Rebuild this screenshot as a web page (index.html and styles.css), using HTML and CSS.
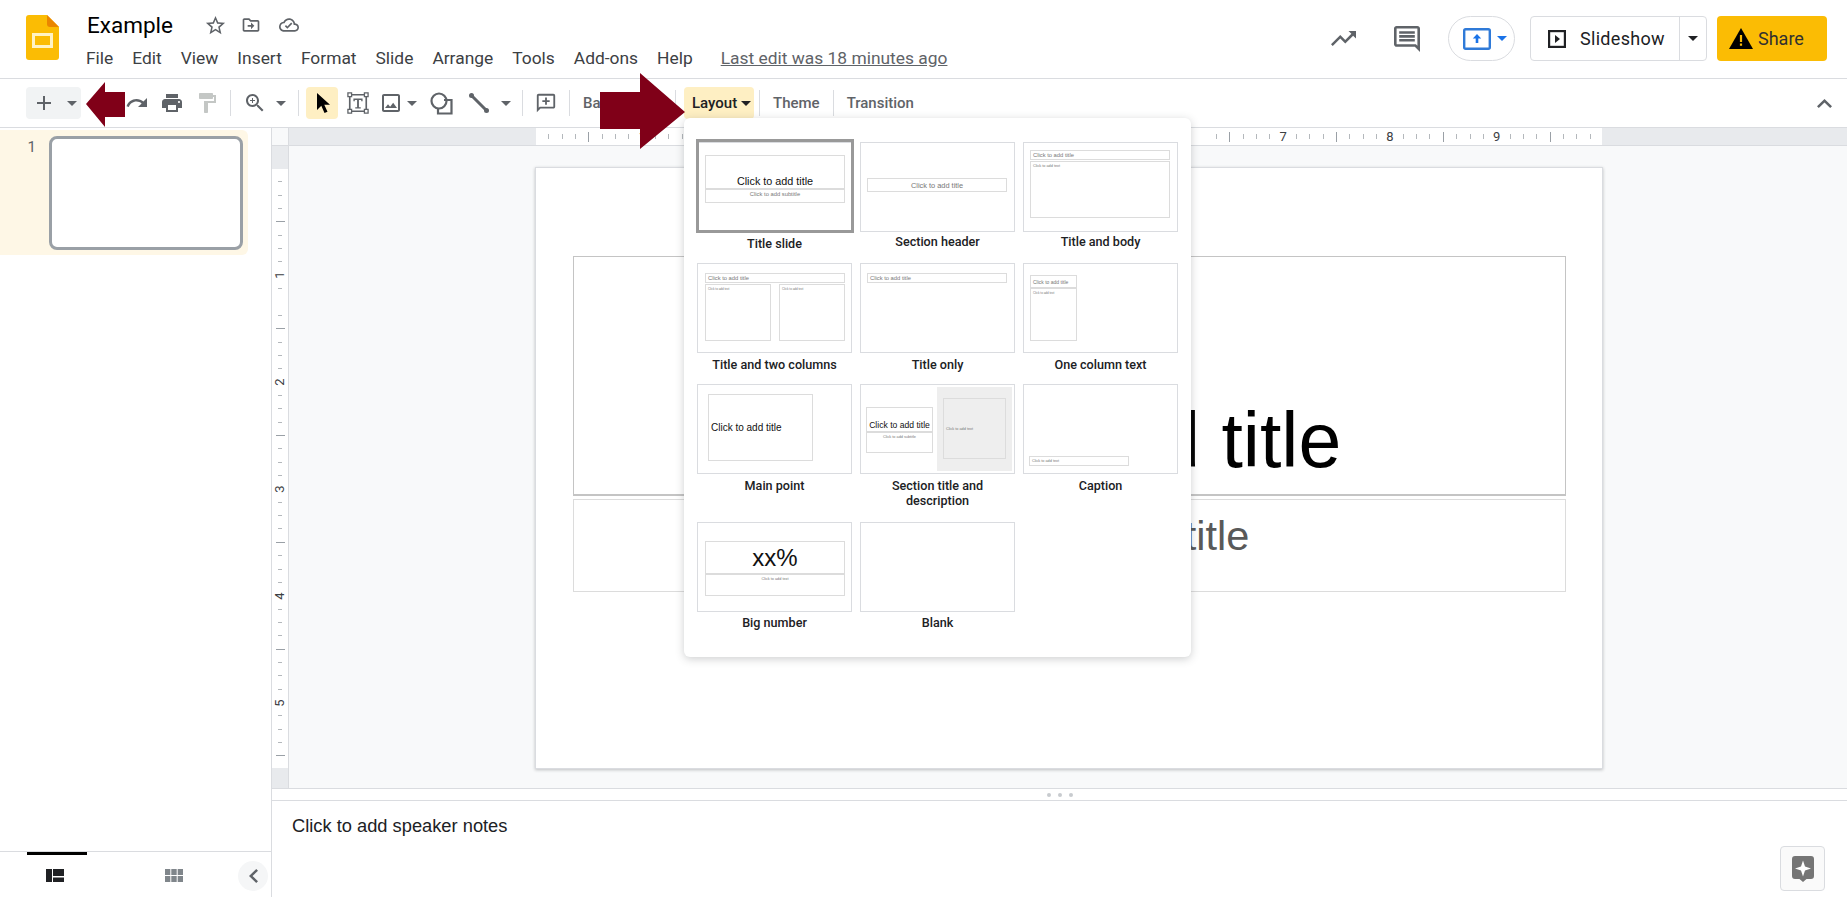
FILE: index.html
```html
<!DOCTYPE html>
<html lang="en">
<head>
  <meta charset="UTF-8" />
  <title>Example - Google Slides</title>
  <link rel="stylesheet" href="styles.css">
</head>
<body>
  <header class="header">
    <svg class="logo" viewBox="0 0 33 45">
      <path d="M3 0H21L33 12V42a3 3 0 0 1-3 3H3a3 3 0 0 1-3-3V3a3 3 0 0 1 3-3z" fill="#fbbc04"/>
      <path d="M21 0L33 12H24a3 3 0 0 1-3-3z" fill="#ea8600"/>
      <rect x="7.5" y="19.5" width="18" height="12" fill="none" stroke="#fff3c4" stroke-width="3"/>
    </svg>
    <div class="doc-info">
      <div class="title-row">
        <span class="doc-title">Example</span>
        <svg class="title-icon star" viewBox="0 0 24 24"><path d="M22 9.24l-7.19-.62L12 2 9.19 8.63 2 9.24l5.46 4.73L5.82 21 12 17.27 18.18 21l-1.63-7.03L22 9.24zM12 15.4l-3.76 2.27 1-4.28-3.32-2.88 4.38-.38L12 6.1l1.71 4.04 4.38.38-3.32 2.88 1 4.28L12 15.4z"/></svg>
        <svg class="title-icon" viewBox="0 0 24 24"><path d="M20 6h-8l-2-2H4c-1.1 0-2 .9-2 2v12c0 1.1.9 2 2 2h16c1.1 0 2-.9 2-2V8c0-1.1-.9-2-2-2zm0 12H4V6h5.17l2 2H20v10zm-8-1v-3H8v-2h4V9l4 4-4 4z"/></svg>
        <svg class="title-icon" viewBox="0 0 24 24"><path d="M19.35 10.04C18.67 6.59 15.64 4 12 4 9.11 4 6.6 5.64 5.35 8.04 2.34 8.36 0 10.91 0 14c0 3.31 2.69 6 6 6h13c2.76 0 5-2.24 5-5 0-2.64-2.05-4.78-4.65-4.96zM19 18H6c-2.21 0-4-1.79-4-4s1.79-4 4-4h.71C7.37 7.69 9.48 6 12 6c3.04 0 5.5 2.46 5.5 5.5v.5H19c1.66 0 3 1.34 3 3s-1.34 3-3 3zm-9-1.5l-3-3 1.41-1.41L10 13.67l4.59-4.58L16 10.5l-6 6z"/></svg>
      </div>
      <nav class="menu">
        <span>File</span><span>Edit</span><span>View</span><span>Insert</span><span>Format</span><span>Slide</span><span>Arrange</span><span>Tools</span><span>Add-ons</span><span>Help</span>
        <a class="last-edit">Last edit was 18 minutes ago</a>
      </nav>
    </div>
    <div class="header-actions">
      <svg class="trend-icon" viewBox="2 6 20 12"><path d="M16 6l2.29 2.29-4.88 4.88-4-4L2 16.59 3.41 18l6-6 4 4 6.3-6.29L22 12V6z"/></svg>
      <svg class="comment-icon" viewBox="2 2 20 20"><path d="M21.99 4c0-1.1-.89-2-1.99-2H4c-1.1 0-2 .9-2 2v12c0 1.1.9 2 2 2h14l4 4-.01-18zM20 4v13.17L18.83 16H4V4h16zM6 12h12v2H6zm0-3h12v2H6zm0-3h12v2H6z"/></svg>
      <div class="present-pill">
        <svg class="present-icon" viewBox="0 0 28 22">
          <rect x="1.2" y="1.2" width="25.6" height="19.6" rx="1.5" fill="none" stroke="#2f7ad8" stroke-width="2.4"/>
          <path d="M14 6l4.2 4.6h-2.9V15h-2.6v-4.4H9.800z" fill="#1a73e8"/>
        </svg>
        <i class="caret caret-blue"></i>
      </div>
      <div class="slideshow">
        <div class="slideshow-main">
          <svg class="play-icon" viewBox="0 0 18 18">
            <rect x="1.100" y="1.100" width="15.800" height="15.800" fill="none" stroke="#202124" stroke-width="2.200"/>
            <path d="M7 5l5 4-5 4z" fill="#202124"/>
          </svg>
          <span>Slideshow</span>
        </div>
        <div class="slideshow-more"><i class="caret caret-dark"></i></div>
      </div>
      <div class="share">
        <svg class="warn-icon" viewBox="0 0 24 21">
          <path d="M12 0L24 21H0z" fill="#000"/>
          <path d="M10.900 7h2.200v7h-2.200zM10.900 15.500h2.200v2.200h-2.200z" fill="#fbbc04"/>
        </svg>
        <span>Share</span>
      </div>
    </div>
  </header>

  <div class="toolbar">
    <div class="new-chip">
      <svg class="plus-icon" viewBox="0 0 14 14"><path d="M6 0h2v6h6v2H8v6H6V8H0V6h6z"/></svg>
      <i class="caret"></i>
    </div>
    <div class="tb-btn w35 first">
      <svg class="tb-icon" viewBox="0 0 24 24"><path d="M12.500 8c-2.650 0-5.050.99-6.900 2.600L2 7v9h9l-3.620-3.620c1.390-1.160 3.160-1.880 5.120-1.880 3.540 0 6.550 2.310 7.600 5.500l2.370-.78C21.080 11.030 17.150 8 12.500 8z"/></svg>
    </div>
    <div class="tb-btn w35">
      <svg class="tb-icon" viewBox="0 0 24 24"><path d="M18.400 10.600C16.550 8.990 14.150 8 11.500 8c-4.650 0-8.580 3.030-9.960 7.220L3.900 16c1.050-3.190 4.050-5.500 7.600-5.500 1.950 0 3.730.72 5.120 1.880L13 16h9V7l-3.600 3.600z"/></svg>
    </div>
    <div class="tb-btn w35">
      <svg class="tb-icon" viewBox="0 0 24 24"><path d="M19 8H5c-1.660 0-3 1.340-3 3v6h4v4h12v-4h4v-6c0-1.660-1.340-3-3-3zm-3 11H8v-5h8v5zm3-7c-.55 0-1-.45-1-1s.45-1 1-1 1 .45 1 1-.45 1-1 1zm-1-9H6v4h12V3z"/></svg>
    </div>
    <div class="tb-btn w35">
      <svg class="tb-icon off" viewBox="0 0 24 24"><path d="M18 4V3c0-.55-.45-1-1-1H5c-.55 0-1 .45-1 1v4c0 .55.45 1 1 1h12c.55 0 1-.45 1-1V6h1v4H9v11c0 .55.45 1 1 1h2c.55 0 1-.45 1-1v-9h8V4h-3z"/></svg>
    </div>
    <i class="tb-sep"></i>
    <div class="tb-btn w35">
      <svg class="tb-icon" viewBox="0 0 24 24"><path d="M15.500 14h-.79l-.28-.27C15.410 12.590 16 11.110 16 9.500 16 5.910 13.090 3 9.500 3S3 5.910 3 9.500 5.910 16 9.500 16c1.610 0 3.090-.59 4.230-1.570l.27.28v.79l5 4.990L20.490 19l-4.990-5zm-6 0C7.010 14 5 11.990 5 9.500S7.010 5 9.500 5 14 7.010 14 9.500 11.990 14 9.500 14zm2.500-4h-2v2H9v-2H7V9h2V7h1v2h2v1z"/></svg>
    </div>
    <div class="tb-caret w18"><i class="caret"></i></div>
    <i class="tb-sep sep-wide"></i>
    <div class="tb-btn select-btn">
      <svg class="tb-icon" viewBox="0 0 24 24"><path d="M7 2v17l4.300-4.200 3.200 7.200 3-1.300-3.200-7H20z" fill="#000"/></svg>
    </div>
    <div class="tb-btn w35 textbox-btn">
      <svg class="tb-icon big" viewBox="0 0 24 24">
        <path d="M4 3h16M4 21h16M3 4v16M21 4v16" fill="none" stroke="#5f6368" stroke-width="1.800"/>
        <path d="M1 1h4v4H1zM19 1h4v4h-4zM1 19h4v4H1zM19 19h4v4h-4z" fill="#fff" stroke="#5f6368" stroke-width="1.400"/>
        <path d="M7 7h10v3h-1.500V8.800h-2.500V16.500h2v1.500H9v-1.500h2V8.800H8.500V10H7z" fill="#5f6368"/>
      </svg>
    </div>
    <div class="tb-btn image-btn">
      <svg class="tb-icon" viewBox="3 3 18 18"><path d="M19 3H5c-1.100 0-2 .9-2 2v14c0 1.100.9 2 2 2h14c1.100 0 2-.9 2-2V5c0-1.100-.9-2-2-2zm0 16H5V5h14v14zm-4.860-7.140l-3 3.860L9 13.140 6 17h12l-3.860-5.140z"/></svg>
    </div>
    <div class="tb-caret w12"><i class="caret"></i></div>
    <div class="tb-btn w36 shape-btn">
      <svg class="tb-icon" viewBox="0 0 24 24">
        <circle cx="10" cy="10" r="7.500" fill="none" stroke="#5f6368" stroke-width="2.200"/>
        <path d="M15 9h7.500v13.500H9V17" fill="none" stroke="#5f6368" stroke-width="2.200"/>
      </svg>
    </div>
    <div class="tb-btn w36 line-btn">
      <svg class="tb-icon" viewBox="0 0 24 24">
        <path d="M5 5l14 14" stroke="#5f6368" stroke-width="3"/>
        <circle cx="4.500" cy="4.500" r="2.500" fill="#5f6368"/>
        <circle cx="19.500" cy="19.500" r="2.500" fill="#5f6368"/>
      </svg>
    </div>
    <div class="tb-caret w20"><i class="caret"></i></div>
    <i class="tb-sep sep-comment"></i>
    <div class="tb-btn w36 comment-btn">
      <svg class="tb-icon" viewBox="0 0 24 24"><path d="M20 2H4c-1.100 0-2 .9-2 2v18l4-4h14c1.100 0 2-.9 2-2V4c0-1.100-.9-2-2-2zm0 14H5.170L4 17.170V4h16v12zM11 14h2v-3h3V9h-3V6h-2v3H8v2h3z"/></svg>
    </div>
    <i class="tb-sep sep-flush"></i>
    <span class="tb-text tb-background">Background</span>
    <i class="tb-sep sep-before-layout"></i>
    <div class="layout-btn"><span>Layout</span><i class="caret caret-dark"></i></div>
    <i class="tb-sep sep-flush"></i>
    <span class="tb-text">Theme</span>
    <i class="tb-sep sep-text"></i>
    <span class="tb-text">Transition</span>
    <svg class="collapse-up" viewBox="0 0 15 9"><path d="M7.500 0L15 7.200 13.200 9 7.500 3.500 1.800 9 0 7.200z"/></svg>
  </div>

  <main class="main">
    <aside class="filmstrip">
      <div class="film-list">
        <div class="film-row">
          <span class="film-num">1</span>
          <div class="film-slide"></div>
        </div>
      </div>
      <div class="film-tabs">
        <div class="film-tab active">
          <svg class="tab-icon" viewBox="0 0 18 13"><path d="M0 0h6v13H0zM7 0h11v7H7zM7 8.500h11V13H7z" fill="#202124"/></svg>
        </div>
        <div class="film-tab second">
          <svg class="tab-icon" viewBox="0 0 18 13"><path d="M0 0h5.300v6H0zM6.300 0h5.400v6H6.300zM12.700 0H18v6h-5.300zM0 7h5.300v6H0zM6.300 7h5.400v6H6.300zM12.700 7H18v6h-5.300z" fill="#80868b"/></svg>
        </div>
        <div class="film-collapse">
          <svg class="chev" viewBox="0 0 9 14"><path d="M9 1.700L3.500 7 9 12.300 7.200 14 0 7 7.200 0z"/></svg>
        </div>
      </div>
    </aside>

    <section class="editor">
      <div class="ruler-row">
        <div class="ruler-corner"></div>
        <div class="h-track">
          <div class="h-ruler">
            <span>1</span><span>2</span><span>3</span><span>4</span><span>5</span><span>6</span><span>7</span><span>8</span><span>9</span>
          </div>
        </div>
      </div>
      <div class="editor-body">
        <div class="v-track">
          <div class="v-ruler">
            <span><b>1</b></span><span><b>2</b></span><span><b>3</b></span><span><b>4</b></span><span><b>5</b></span>
          </div>
        </div>
        <div class="canvas">
          <div class="slide">
            <div class="slide-title">Click to add title</div>
            <div class="slide-subtitle">Click to add subtitle</div>
          </div>
        </div>
      </div>
      <div class="sash"><i></i><i></i><i></i></div>
      <div class="notes">
        Click to add speaker notes
        <div class="notes-btn">
          <svg class="notes-icon" viewBox="0 0 22 26">
            <path d="M3 0h16a3 3 0 0 1 3 3v17a3 3 0 0 1-3 3h-4.500L11 26l-3.500-3H3a3 3 0 0 1-3-3V3a3 3 0 0 1 3-3z" fill="#757575"/>
            <path d="M11 4.500l2 6 6 2-6 2-2 6-2-6-6-2 6-2z" fill="#fff"/>
          </svg>
        </div>
      </div>
    </section>
  </main>

  <!-- layout picker -->
  <div class="layout-menu">
    <div class="layout-item selected">
      <div class="thumb">
        <div class="ph t1-title"><span class="fs-11 dark">Click to add title</span></div>
        <div class="ph t1-sub"><span class="fs-6">Click to add subtitle</span></div>
      </div>
      <p class="label">Title slide</p>
    </div>
    <div class="layout-item">
      <div class="thumb">
        <div class="ph t2-title"><span class="fs-7">Click to add title</span></div>
      </div>
      <p class="label">Section header</p>
    </div>
    <div class="layout-item">
      <div class="thumb">
        <div class="ph t3-title left"><span class="fs-6">Click to add title</span></div>
        <div class="ph t3-body top"><span class="fs-4">Click to add text</span></div>
      </div>
      <p class="label">Title and body</p>
    </div>
    <div class="layout-item">
      <div class="thumb">
        <div class="ph t4-title left"><span class="fs-6">Click to add title</span></div>
        <div class="ph t4-col1 top"><span class="fs-3">Click to add text</span></div>
        <div class="ph t4-col2 top"><span class="fs-3">Click to add text</span></div>
      </div>
      <p class="label">Title and two columns</p>
    </div>
    <div class="layout-item">
      <div class="thumb">
        <div class="ph t5-title left"><span class="fs-6">Click to add title</span></div>
      </div>
      <p class="label">Title only</p>
    </div>
    <div class="layout-item">
      <div class="thumb">
        <div class="ph t6-title left"><span class="fs-5">Click to add title</span></div>
        <div class="ph t6-body top"><span class="fs-3">Click to add text</span></div>
      </div>
      <p class="label">One column text</p>
    </div>
    <div class="layout-item">
      <div class="thumb">
        <div class="ph t7-title left"><span class="fs-10 dark">Click to add title</span></div>
      </div>
      <p class="label">Main point</p>
    </div>
    <div class="layout-item wrap">
      <div class="thumb">
        <div class="ph t8-title"><span class="fs-9 dark">Click to add title</span></div>
        <div class="ph t8-sub top-center"><span class="fs-4">Click to add subtitle</span></div>
        <div class="t8-panel">
          <div class="ph t8-text left"><span class="fs-4">Click to add text</span></div>
        </div>
      </div>
      <p class="label">Section title and<br>description</p>
    </div>
    <div class="layout-item">
      <div class="thumb">
        <div class="ph t9-cap left"><span class="fs-4">Click to add text</span></div>
      </div>
      <p class="label">Caption</p>
    </div>
    <div class="layout-item">
      <div class="thumb">
        <div class="ph t10-num"><span class="fs-num">xx%</span></div>
        <div class="ph t10-sub top-center"><span class="fs-4">Click to add text</span></div>
      </div>
      <p class="label">Big number</p>
    </div>
    <div class="layout-item">
      <div class="thumb"></div>
      <p class="label">Blank</p>
    </div>
  </div>

  <!-- annotation arrows -->
  <svg class="arrow arrow-left" viewBox="0 0 39 45"><path d="M0 22L19 0V10H39V35H19V45z"/></svg>
  <svg class="arrow arrow-right" viewBox="0 0 85 76"><path d="M85 39L40 0V19H0V56H40V76z"/></svg>
</body>
</html>
```

FILE: styles.css
```css
* {
  margin: 0;
  padding: 0;
  box-sizing: border-box;
}
html, body {
  height: 100%;
  overflow: hidden;
}
body {
  position: relative;
  display: flex;
  flex-direction: column;
  font-family: Roboto, sans-serif;
  color: #202124;
  background: #fff;
}
svg {
  display: block;
  fill: #5f6368;
}
i {
  font-style: normal;
}

.caret {
  display: block;
  width: 0;
  height: 0;
  border-left: 5px solid transparent;
  border-right: 5px solid transparent;
  border-top: 5px solid #5f6368;
}
.caret-blue {
  border-top-color: #1a73e8;
}
.caret-dark {
  border-top-color: #202124;
}

/* top bar */
.header {
  flex: none;
  display: flex;
  height: 79px;
  padding-left: 26px;
  border-bottom: 1px solid #dadce0;
}
.logo {
  flex: none;
  width: 33px;
  height: 45px;
  margin-top: 15px;
}
.doc-info {
  margin-left: 27px;
}
.title-row {
  display: flex;
  align-items: center;
  height: 36px;
  margin-top: 7px;
}
.doc-title {
  font-size: 22.5px;
  color: #000;
  padding-left: 1px;
  width: 118px;
}
.title-icon {
  width: 20px;
  height: 20px;
  margin-right: 18px;
}
.star {
  width: 23px;
  height: 23px;
  margin-right: 14px;
}
.menu {
  display: flex;
  align-items: center;
  height: 26px;
  margin-top: 2px;
  font-size: 17.4px;
  color: #3c4043;
  gap: 19px;
}
.last-edit {
  margin-left: 9px;
  color: #5f6368;
  text-decoration: underline;
}
.header-actions {
  margin-left: auto;
  margin-right: 20px;
  display: flex;
  align-items: center;
  height: 45px;
  margin-top: 16px;
}
.trend-icon {
  width: 25px;
  height: 15px;
  margin-right: 38px;
}
.comment-icon {
  width: 26px;
  height: 26px;
  margin-right: 28px;
}
.present-pill {
  width: 67px;
  height: 45px;
  margin-right: 15px;
  border: 1px solid #dadce0;
  border-radius: 23px;
  display: flex;
  align-items: center;
  padding-left: 14px;
  gap: 6px;
}
.present-icon {
  width: 28px;
  height: 22px;
}
.slideshow {
  display: flex;
  width: 177px;
  height: 45px;
  margin-right: 10px;
  border: 1px solid #dadce0;
  border-radius: 4px;
}
.slideshow-main {
  flex: 1;
  display: flex;
  align-items: center;
  padding-left: 17px;
  gap: 14px;
  font-size: 18px;
  letter-spacing: 0.3px;
  color: #202124;
}
.play-icon {
  width: 18px;
  height: 18px;
}
.slideshow-more {
  width: 27px;
  border-left: 1px solid #dadce0;
  display: flex;
  align-items: center;
  justify-content: center;
}
.share {
  width: 110px;
  height: 45px;
  background: #fbbc04;
  border-radius: 4px;
  display: flex;
  align-items: center;
  padding-left: 12px;
  gap: 5px;
  font-size: 18px;
  color: #303030;
}
.warn-icon {
  width: 24px;
  height: 21px;
}

/* toolbar */
.toolbar {
  flex: none;
  display: flex;
  align-items: center;
  height: 49px;
  padding-left: 26px;
  border-bottom: 1px solid #dadce0;
}
.new-chip {
  width: 55px;
  height: 32px;
  background: #f1f3f4;
  border-radius: 4px;
  display: flex;
  align-items: center;
  padding-left: 11px;
  gap: 16px;
}
.plus-icon {
  width: 14px;
  height: 14px;
}
.tb-btn {
  flex: none;
  height: 32px;
  display: flex;
  align-items: center;
  justify-content: center;
}
.tb-btn.first {
  margin-left: 3px;
}
.w35 { width: 35px; }
.w36 { width: 36px; }
.tb-icon {
  width: 24px;
  height: 24px;
}
.tb-icon.off {
  fill: #c4c7c5;
}
.tb-icon.big {
  width: 22px;
  height: 22px;
}
.tb-caret {
  flex: none;
  height: 32px;
  display: flex;
  align-items: center;
  justify-content: center;
}
.w12 { width: 12px; }
.w18 { width: 18px; }
.w20 { width: 20px; }
.tb-sep {
  flex: none;
  width: 1px;
  height: 26px;
  margin: 0 6px;
  background: #dadce0;
}
.tb-sep.sep-wide {
  margin: 0 7px 0 8px;
}
.tb-sep.sep-comment {
  margin: 0 5px 0 6px;
}
.tb-sep.sep-flush {
  margin: 0 0 0 5px;
}
.tb-sep.sep-text {
  margin: 0;
}
.tb-sep.sep-before-layout {
  margin: 0 8px 0 0;
}
.tb-text {
  flex: none;
  padding: 0 13px;
  font-size: 15px;
  font-weight: 500;
  color: #5f6368;
}
.tb-background {
  width: 105px;
  padding-right: 0;
  white-space: nowrap;
}
.select-btn {
  width: 32px;
  background: #feefc3;
  border-radius: 4px;
}
.textbox-btn {
  margin-left: 2px;
}
.image-btn {
  width: 31px;
}
.image-btn .tb-icon {
  width: 18px;
  height: 18px;
}
.shape-btn {
  margin: 0 -1px 0 5px;
}
.line-btn {
  margin-left: 3px;
  margin-right: -1px;
}
.comment-btn .tb-icon {
  width: 22px;
  height: 22px;
}
.layout-btn {
  flex: none;
  width: 70px;
  height: 32px;
  background: #feefc3;
  border-radius: 4px;
  display: flex;
  align-items: center;
  padding-left: 8px;
  gap: 4px;
  font-size: 15px;
  font-weight: 500;
  color: #202124;
}
.collapse-up {
  width: 15px;
  height: 9px;
  margin-left: auto;
  margin-right: 15px;
}

/* main area */
.main {
  flex: 1;
  display: flex;
  min-height: 0;
}
.filmstrip {
  flex: none;
  width: 272px;
  display: flex;
  flex-direction: column;
  border-right: 1px solid #dadce0;
}
.film-list {
  flex: 1;
  padding-top: 2px;
}
.film-row {
  display: flex;
  width: 248px;
  height: 125px;
  padding: 6px 5px 5px 0;
  background: #fef7e6;
  border-radius: 0 6px 6px 0;
}
.film-num {
  width: 49px;
  padding: 2px 13px 0 0;
  text-align: right;
  font-size: 15px;
  color: #5f6368;
}
.film-slide {
  flex: 1;
  background: #fff;
  border: 3px solid #9aa0a6;
  border-radius: 8px;
}
.film-tabs {
  flex: none;
  height: 46px;
  display: flex;
  padding-left: 27px;
  border-top: 1px solid #dadce0;
}
.film-tab {
  width: 60px;
  display: flex;
  justify-content: center;
  padding-top: 17px;
}
.film-tab.active {
  border-top: 3px solid #000;
  padding: 14px 4px 0 0;
}
.film-tab.second {
  margin-left: 57px;
}
.tab-icon {
  width: 18px;
  height: 13px;
}
.film-collapse {
  width: 30px;
  height: 30px;
  margin: 9px 0 0 34px;
  background: #f5f6f7;
  border-radius: 50%;
  display: flex;
  align-items: center;
  justify-content: center;
}
.chev {
  width: 9px;
  height: 14px;
}

.editor {
  flex: 1;
  min-width: 0;
  display: flex;
  flex-direction: column;
}
.ruler-row {
  flex: none;
  display: flex;
  height: 18px;
  border-bottom: 1px solid #dadce0;
}
.ruler-corner {
  flex: none;
  width: 17px;
  background: #f8f9fa;
  border-right: 1px solid #dadce0;
}
.h-track {
  flex: 1;
  background: #e8eaed;
  padding-left: 247px;
}
.h-ruler {
  width: 1066px;
  height: 100%;
  padding-left: 53px;
  display: flex;
  align-items: center;
  background-color: #fff;
  background-image:
    repeating-linear-gradient(to right, transparent 0 52.4px, #9aa0a6 52.4px 53.4px),
    repeating-linear-gradient(to right, transparent 0 12.35px, #b4b8bc 12.35px 13.35px);
  background-size: 100% 10px, 100% 5px;
  background-position: 0 center;
  background-repeat: no-repeat;
}
.h-ruler span {
  width: 106.8px;
  text-align: center;
  font-size: 13px;
  line-height: 14px;
  color: #3c4043;
  background: linear-gradient(to right, transparent 46%, #fff 46% 54%, transparent 54%);
}
.editor-body {
  flex: 1;
  min-height: 0;
  display: flex;
}
.v-track {
  flex: none;
  width: 17px;
  padding: 23px 0 20px;
  background: #e8eaed;
  border-right: 1px solid #dadce0;
}
.v-ruler {
  height: 100%;
  padding-top: 53px;
  background-color: #fff;
  background-image:
    repeating-linear-gradient(to bottom, transparent 0 52.4px, #9aa0a6 52.4px 53.4px),
    repeating-linear-gradient(to bottom, transparent 0 12.35px, #b4b8bc 12.35px 13.35px);
  background-size: 9px 100%, 4px 100%;
  background-position: 4px 0, 6px 0;
  background-repeat: no-repeat;
}
.v-ruler span {
  display: flex;
  height: 106.8px;
  align-items: center;
  justify-content: center;
}
.v-ruler b {
  display: block;
  width: 14px;
  background: #fff;
  transform: rotate(-90deg);
  text-align: center;
  font-size: 13px;
  font-weight: 400;
  line-height: 12px;
  color: #3c4043;
}
.canvas {
  flex: 1;
  min-width: 0;
  background: #f8f9fa;
  padding: 21px 0 0 246px;
}
.slide {
  width: 1068px;
  height: 602px;
  padding: 88px 36px 0 37px;
  background: #fff;
  border: 1px solid #dadce0;
  box-shadow: 0 1px 3px rgba(60, 64, 67, 0.3);
}
.slide-title {
  height: 240px;
  display: flex;
  align-items: flex-end;
  justify-content: center;
  padding-bottom: 9px;
  border: 1px solid #c4c4c4;
  border-bottom-width: 2px;
  font-family: "Liberation Sans", Arial, sans-serif;
  font-size: 77px;
  color: #000;
}
.slide-subtitle {
  height: 93px;
  margin-top: 3px;
  text-align: center;
  padding-top: 12px;
  border: 1px solid #dcdcdc;
  font-family: "Liberation Sans", Arial, sans-serif;
  font-size: 41.5px;
  color: #595959;
}
.sash {
  flex: none;
  height: 13px;
  display: flex;
  align-items: center;
  justify-content: center;
  gap: 7px;
  border-top: 1px solid #dadce0;
  border-bottom: 1px solid #dadce0;
}
.sash i {
  width: 4px;
  height: 4px;
  border-radius: 50%;
  background: #c8cbcf;
}
.notes {
  position: relative;
  flex: none;
  height: 96px;
  padding: 14px 0 0 20px;
  font-family: "Liberation Sans", Arial, sans-serif;
  font-size: 18.3px;
  color: #202124;
}
.notes-btn {
  position: absolute;
  right: 22px;
  bottom: 6px;
  width: 45px;
  height: 45px;
  background: #fafafa;
  border: 1px solid #dadce0;
  border-radius: 4px;
  display: flex;
  align-items: center;
  justify-content: center;
}
.notes-icon {
  width: 22px;
  height: 26px;
}

/* layout picker */
.layout-menu {
  position: absolute;
  left: 684px;
  top: 118px;
  width: 507px;
  padding: 24px 13px 27px;
  display: grid;
  grid-template-columns: repeat(3, 155px);
  column-gap: 8px;
  row-gap: 12px;
  align-items: start;
  background: #fff;
  border-radius: 6px;
  box-shadow: 0 2px 8px rgba(60, 64, 67, 0.25);
}
.thumb {
  position: relative;
  height: 90px;
  border: 1px solid #dadce0;
  background: #fff;
}
.selected .thumb::after {
  content: "";
  position: absolute;
  top: -4px;
  left: -2px;
  right: -3px;
  bottom: -2px;
  border: 3px solid #999;
}
.label {
  margin-top: 4px;
  text-align: center;
  font-size: 12.6px;
  font-weight: 500;
  line-height: 15px;
  color: #202124;
}
.layout-item:nth-child(-n+3) .label {
  margin: 2px 0;
}
.layout-item:nth-child(n+10) .label {
  margin-top: 3px;
}
.selected .label {
  position: relative;
  top: 2px;
}
.wrap .label {
  margin-bottom: 2px;
}

/* placeholders on the small slides */
.ph {
  position: absolute;
  display: flex;
  align-items: center;
  justify-content: center;
  border: 1px solid #dcdcdc;
  font-family: "Liberation Sans", Arial, sans-serif;
  white-space: nowrap;
  overflow: hidden;
  color: #777;
}
.ph.left {
  justify-content: flex-start;
  padding-left: 2px;
}
.ph.top {
  align-items: flex-start;
  justify-content: flex-start;
  padding: 2px 0 0 2px;
}
.ph.top-center {
  align-items: flex-start;
  padding-top: 2px;
}
.dark { color: #111; }
.fs-3 { font-size: 3px; }
.fs-4 { font-size: 3.8px; }
.fs-5 { font-size: 5px; }
.fs-6 { font-size: 5.8px; }
.fs-7 { font-size: 7.4px; }
.fs-9 { font-size: 8.6px; }
.fs-10 { font-size: 10px; }
.fs-11 { font-size: 10.8px; }
.fs-num { font-size: 24px; color: #111; }

.t1-title { left: 7px; top: 12px; width: 140px; height: 34px; align-items: flex-end; padding-bottom: 1px; }
.t1-sub { left: 7px; top: 46px; width: 140px; height: 14px; align-items: flex-start; padding-top: 1px; }
.t2-title { left: 6px; top: 35px; width: 140px; height: 14px; }
.t3-title { left: 6px; top: 7px; width: 140px; height: 10px; }
.t3-body { left: 6px; top: 18px; width: 140px; height: 57px; }
.t4-title { left: 7px; top: 9px; width: 140px; height: 10px; }
.t4-col1 { left: 7px; top: 20px; width: 66px; height: 57px; }
.t4-col2 { left: 81px; top: 20px; width: 66px; height: 57px; }
.t5-title { left: 6px; top: 9px; width: 140px; height: 10px; }
.t6-title { left: 6px; top: 11px; width: 47px; height: 13px; }
.t6-body { left: 6px; top: 24px; width: 47px; height: 53px; }
.t7-title { left: 10px; top: 9px; width: 105px; height: 67px; }
.t8-title { left: 5px; top: 22px; width: 67px; height: 25px; align-items: flex-end; padding-bottom: 1px; }
.t8-sub { left: 5px; top: 47px; width: 67px; height: 21px; }
.t8-panel { position: absolute; left: 76px; top: 2px; width: 75px; height: 84px; background: #eee; }
.t8-text { left: 6px; top: 11px; width: 63px; height: 61px; }
.t9-cap { left: 5px; top: 71px; width: 100px; height: 10px; }
.t10-num { left: 7px; top: 18px; width: 140px; height: 33px; }
.t10-sub { left: 7px; top: 51px; width: 140px; height: 22px; }

/* annotation arrows */
.arrow {
  position: absolute;
  fill: #800018;
}
.arrow-left {
  left: 86px;
  top: 82px;
  width: 39px;
  height: 45px;
}
.arrow-right {
  left: 600px;
  top: 73px;
  width: 85px;
  height: 76px;
}
```
